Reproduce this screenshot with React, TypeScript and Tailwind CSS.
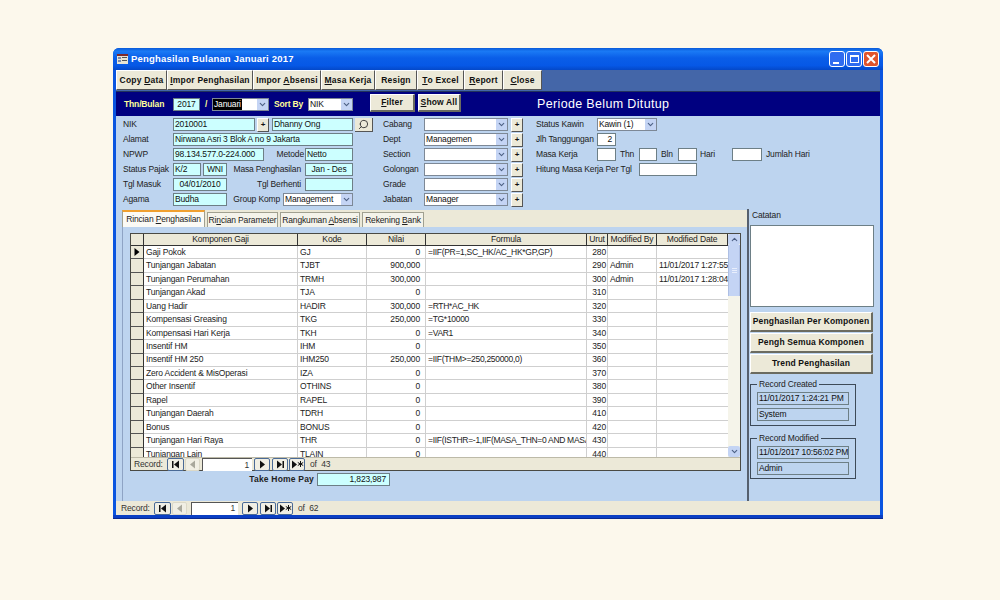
import { Search, ChevronDown, ChevronUp } from "lucide-react";
import type { ReactNode } from "react";

const font = "font-['Liberation_Sans',sans-serif]";

const toolbarItems: [string, string, string, number][] = [
  ["", "Copy ", "Data", 51],
  ["I", "mpor Penghasilan", "", 86],
  ["", "Impor ", "Absensi", 68],
  ["M", "asa Kerja", "", 54],
  ["", "Resign", "", 42],
  ["T", "o Excel", "", 47],
  ["R", "eport", "", 39],
  ["C", "lose", "", 39],
];

const rows: [string, string, string, string, string, string, string][] = [
  ["Gaji Pokok", "GJ", "0", "=IIF(PR=1,SC_HK/AC_HK*GP,GP)", "280", "", ""],
  ["Tunjangan Jabatan", "TJBT", "900,000", "", "290", "Admin", "11/01/2017 1:27:55"],
  ["Tunjangan Perumahan", "TRMH", "300,000", "", "300", "Admin", "11/01/2017 1:28:04"],
  ["Tunjangan Akad", "TJA", "0", "", "310", "", ""],
  ["Uang Hadir", "HADIR", "300,000", "=RTH*AC_HK", "320", "", ""],
  ["Kompensasi Greasing", "TKG", "250,000", "=TG*10000", "330", "", ""],
  ["Kompensasi Hari Kerja", "TKH", "0", "=VAR1", "340", "", ""],
  ["Insentif HM", "IHM", "0", "", "350", "", ""],
  ["Insentif HM 250", "IHM250", "250,000", "=IIF(THM>=250,250000,0)", "360", "", ""],
  ["Zero Accident & MisOperasi", "IZA", "0", "", "370", "", ""],
  ["Other Insentif", "OTHINS", "0", "", "380", "", ""],
  ["Rapel", "RAPEL", "0", "", "390", "", ""],
  ["Tunjangan Daerah", "TDRH", "0", "", "410", "", ""],
  ["Bonus", "BONUS", "0", "", "420", "", ""],
  ["Tunjangan Hari Raya", "THR", "0", "=IIF(ISTHR=-1,IIF(MASA_THN=0 AND MASA", "430", "", ""],
  ["Tunjangan Lain", "TLAIN", "0", "", "440", "", ""],
];

const cols = "grid grid-cols-[13px_154px_69px_59px_161px_21px_49px_71px]";

function Field({ value, w, center, right, white }: { value?: string; w: string; center?: boolean; right?: boolean; white?: boolean }) {
  return (
    <div
      className={`${w} h-[13px] shrink-0 flex items-center px-px border border-[#6d7f86] overflow-hidden whitespace-nowrap ${white ? "bg-white" : "bg-[#ccffff]"} ${center ? "justify-center" : ""} ${right ? "justify-end pr-[3px]" : ""}`}
    >
      {value}
    </div>
  );
}

function Combo({ value, w }: { value?: string; w: string }) {
  return (
    <div className={`${w} h-[13px] shrink-0 flex items-center bg-white border border-[#7d8896] overflow-hidden`}>
      <span className="flex-1 px-px whitespace-nowrap overflow-hidden">{value}</span>
      <span className="w-[11px] h-[11px] flex items-center justify-center bg-[#c4d4f4]">
        <ChevronDown size={9} strokeWidth={3} className="text-[#4d6185]" />
      </span>
    </div>
  );
}

function PlusBtn() {
  return (
    <div className="w-[12px] h-[14px] shrink-0 flex items-center justify-center bg-[#ece9d8] border-r border-b border-[#555] border-t-white border-l-white border-t border-l text-[8px] font-bold">
      +
    </div>
  );
}

function RaisedBtn({ children, w, h }: { children: ReactNode; w: string; h: string }) {
  return (
    <div
      className={`${w} ${h} shrink-0 flex items-center justify-center bg-[#ece9d8] border-t border-l border-t-white border-l-white border-r-2 border-b-2 border-r-[#6b6b60] border-b-[#6b6b60] font-bold tracking-[0.15px] text-[#111] whitespace-nowrap`}
    >
      {children}
    </div>
  );
}

function Label({ children, w }: { children: ReactNode; w: string }) {
  return <span className={`${w} shrink-0 whitespace-nowrap text-[#222]`}>{children}</span>;
}

function NavIcon({ kind }: { kind: "first" | "prev" | "next" | "last" | "new" }) {
  const color = kind === "prev" ? "#a9a89c" : "#111";
  return (
    <svg width="13" height="9" viewBox="0 0 13 9" fill={color}>
      {kind === "first" && (
        <>
          <rect x="3" y="1" width="1.5" height="7" />
          <path d="M10 0.5v8L5 4.5z" />
        </>
      )}
      {kind === "prev" && <path d="M9 0.5v8L4 4.5z" />}
      {kind === "next" && <path d="M4 0.5v8L9 4.5z" />}
      {kind === "last" && (
        <>
          <path d="M3 0.5v8L8 4.5z" />
          <rect x="8.5" y="1" width="1.5" height="7" />
        </>
      )}
      {kind === "new" && (
        <>
          <path d="M1 0.5v8L6 4.5z" />
          <path d="M9.5 1v6M6.8 2.5l5.4 3M12.2 2.5l-5.4 3" stroke={color} strokeWidth="1" fill="none" />
        </>
      )}
    </svg>
  );
}

function NavBtn({ kind, w }: { kind: "first" | "prev" | "next" | "last" | "new"; w: string }) {
  return (
    <div
      className={`${w} h-[13px] shrink-0 flex items-center justify-center rounded-[2px] bg-[#f1efe4] border ${kind === "prev" ? "border-[#dcd9c8]" : "border-[#4a6a96]"}`}
    >
      <NavIcon kind={kind} />
    </div>
  );
}

function RecordNav({ total, labelW, inputW, gap }: { total: string; labelW: string; inputW: string; gap: string }) {
  return (
    <div className="flex items-center h-full text-[#333]">
      <span className={labelW}>Record:</span>
      <NavBtn kind="first" w="w-[17px]" />
      <div className="w-[1px]" />
      <NavBtn kind="prev" w="w-[15px]" />
      <div className={gap} />
      <div className={`${inputW} h-[13px] flex items-center justify-end pr-[3px] bg-white border-t border-l border-[#555]`}>1</div>
      <div className={gap} />
      <NavBtn kind="next" w="w-[16px]" />
      <div className="w-[2px]" />
      <NavBtn kind="last" w="w-[16px]" />
      <div className="w-[1px]" />
      <NavBtn kind="new" w="w-[16px]" />
      <span className="ml-[5px]">of&nbsp; {total}</span>
    </div>
  );
}

function Group({ title, a, b, h }: { title: string; a: string; b: string; h: string }) {
  return (
    <div className={`relative w-[106px] ${h} border border-[#3d4a58] px-[6px] pt-[7px] flex flex-col gap-[3px]`}>
      <span className="absolute left-[6px] -top-[5px] px-[2px] bg-[#bdd4ef] text-[#222] whitespace-nowrap">{title}</span>
      <div className="h-[13px] flex items-center px-px border border-[#6d7f86] bg-[#bdd4ef] whitespace-nowrap">{a}</div>
      <div className="h-[13px] flex items-center px-px border border-[#6d7f86] bg-[#bdd4ef] whitespace-nowrap">{b}</div>
    </div>
  );
}

export default function App() {
  return (
    <div className={`${font} w-[1000px] h-[600px] bg-[#fcf8ec] pt-[48px] pl-[113px] text-[8.5px] tracking-[-0.15px] leading-none text-[#111]`}>
      <div className="w-[770px] h-[471px] flex flex-col rounded-t-[6px] overflow-hidden bg-[#0a55e0]">
        {/* title bar */}
        <div className="h-[22px] shrink-0 flex items-center pl-[4px] pr-[4px] bg-[linear-gradient(180deg,#0a5ad8_0%,#1a7af5_15%,#0a5ee8_45%,#0658e6_80%,#0448c8_100%)]">
          <svg width="11" height="10" viewBox="0 0 11 10" className="shrink-0">
            <rect width="11" height="10" fill="#e8e4d4" />
            <rect x="0" y="0" width="11" height="2" fill="#7f2a2a" />
            <rect x="1" y="3" width="3" height="2" fill="#7a8ab0" />
            <rect x="5" y="3" width="5" height="1" fill="#555" />
            <rect x="1" y="6" width="3" height="2" fill="#7a8ab0" />
            <rect x="5" y="6" width="5" height="1" fill="#555" />
          </svg>
          <span className="ml-[3px] text-white font-bold text-[9.5px] tracking-[0.2px] whitespace-nowrap">Penghasilan Bulanan Januari 2017</span>
          <div className="ml-auto flex gap-[1px]">
            <div className="w-[16px] h-[16px] rounded-[3px] border border-white bg-[#2f6cf0] flex items-end pl-[3px] pb-[2px]">
              <div className="w-[6px] h-[2px] bg-white" />
            </div>
            <div className="w-[16px] h-[16px] rounded-[3px] border border-white bg-[#2f6cf0] flex items-center justify-center">
              <div className="w-[9px] h-[8px] border border-white border-t-2" />
            </div>
            <div className="w-[16px] h-[16px] rounded-[3px] border border-white bg-[#e0542c] flex items-center justify-center">
              <svg width="10" height="10" viewBox="0 0 10 10">
                <path d="M1 1l8 8M9 1l-8 8" stroke="#fff" strokeWidth="2" />
              </svg>
            </div>
          </div>
        </div>

        <div className="flex-1 flex flex-col mx-[3px] min-h-0">
          {/* toolbar */}
          <div className="h-[22px] shrink-0 flex items-stretch bg-[#4466a8] pb-[1px] border-b border-[#22335c]">
            {toolbarItems.map(([u, rest, u2, w], i) => (
              <div
                key={i}
                style={{ width: w }}
                className="shrink-0 flex items-center justify-center bg-[#ece9d8] border-t border-l border-white border-r border-r-[#555] border-b border-b-[#555] font-bold tracking-[0.2px] whitespace-nowrap"
              >
                {u && <u>{u}</u>}
                <span className="whitespace-pre">{rest}</span>
                {u2 && (
                  <>
                    <u>{u2[0]}</u>
                    {u2.slice(1)}
                  </>
                )}
              </div>
            ))}
          </div>

          {/* filter bar */}
          <div className="h-[24px] shrink-0 flex items-center bg-[#000080] pl-[8px]">
            <span className="w-[49px] font-bold text-[#ffff99] whitespace-nowrap">Thn/Bulan</span>
            <Field value="2017" w="w-[27px]" center />
            <span className="w-[12px] text-center font-bold text-[#ffff99]">/</span>
            <div className="w-[57px] h-[13px] shrink-0 flex items-center bg-white border border-[#7d8896]">
              <span className="w-[29px] h-full flex items-center bg-black text-white px-px">Januari</span>
              <span className="ml-auto w-[11px] h-[11px] flex items-center justify-center bg-[#c4d4f4]">
                <ChevronDown size={9} strokeWidth={3} className="text-[#4d6185]" />
              </span>
            </div>
            <span className="ml-[5px] w-[34px] font-bold text-[#ffff99] whitespace-nowrap">Sort By</span>
            <Combo value="NIK" w="w-[45px]" />
            <div className="w-[17px]" />
            <div className="flex gap-[3px] pb-[2px]">
              <RaisedBtn w="w-[45px]" h="h-[18px]">
                <span>
                  <u>F</u>ilter
                </span>
              </RaisedBtn>
              <RaisedBtn w="w-[43px]" h="h-[18px]">
                <span>
                  <u>S</u>how All
                </span>
              </RaisedBtn>
            </div>
            <span className="ml-[76px] text-[12.5px] tracking-[0.35px] text-white whitespace-nowrap">Periode Belum Ditutup</span>
          </div>

          {/* form header */}
          <div className="h-[93px] shrink-0 flex bg-[#bdd4ef] pl-[7px] pt-[2px]">
            <div className="w-[260px] shrink-0 flex flex-col gap-[2px]">
              <div className="h-[13px] flex items-center">
                <Label w="w-[50px]">NIK</Label>
                <Field value="2010001" w="w-[82px]" />
                <div className="w-[2px]" />
                <PlusBtn />
                <div className="w-[3px]" />
                <Field value="Dhanny Ong" w="w-[81px]" />
                <div className="w-[2px]" />
                <div className="w-[18px] h-[14px] shrink-0 flex items-center justify-center bg-[#ece9d8] border-r border-b border-[#555]">
                  <Search size={11} strokeWidth={2} className="-scale-x-100 text-[#333]" />
                </div>
              </div>
              <div className="h-[13px] flex items-center">
                <Label w="w-[50px]">Alamat</Label>
                <Field value="Nirwana Asri 3 Blok A no 9 Jakarta" w="w-[180px]" />
              </div>
              <div className="h-[13px] flex items-center">
                <Label w="w-[50px]">NPWP</Label>
                <Field value="98.134.577.0-224.000" w="w-[91px]" />
                <span className="w-[41px] shrink-0 text-right pr-[1px] text-[#222]">Metode</span>
                <Field value="Netto" w="w-[48px]" />
              </div>
              <div className="h-[13px] flex items-center">
                <Label w="w-[50px]">Status Pajak</Label>
                <Field value="K/2" w="w-[28px]" />
                <div className="w-[2px]" />
                <Field value="WNI" w="w-[24px]" center />
                <span className="w-[78px] shrink-0 text-right pr-[4px] text-[#222] whitespace-nowrap">Masa Penghasilan</span>
                <Field value="Jan - Des" w="w-[48px]" center />
              </div>
              <div className="h-[13px] flex items-center">
                <Label w="w-[50px]">Tgl Masuk</Label>
                <Field value="04/01/2010" w="w-[54px]" center />
                <span className="w-[78px] shrink-0 text-right pr-[4px] text-[#222] whitespace-nowrap">Tgl Berhenti</span>
                <Field w="w-[48px]" />
              </div>
              <div className="h-[13px] flex items-center">
                <Label w="w-[50px]">Agama</Label>
                <Field value="Budha" w="w-[54px]" />
                <span className="w-[56px] shrink-0 text-right pr-[3px] text-[#222] whitespace-nowrap">Group Komp</span>
                <Combo value="Management" w="w-[70px]" />
              </div>
            </div>

            <div className="w-[153px] shrink-0 flex flex-col gap-[2px]">
              {[
                ["Cabang", ""],
                ["Dept", "Managemen"],
                ["Section", ""],
                ["Golongan", ""],
                ["Grade", ""],
                ["Jabatan", "Manager"],
              ].map(([label, value]) => (
                <div key={label} className="h-[13px] flex items-center">
                  <Label w="w-[41px]">{label}</Label>
                  <Combo value={value} w="w-[84px]" />
                  <div className="w-[3px]" />
                  <PlusBtn />
                </div>
              ))}
            </div>

            <div className="flex-1 flex flex-col gap-[2px]">
              <div className="h-[13px] flex items-center">
                <Label w="w-[61px]">Status Kawin</Label>
                <Combo value="Kawin (1)" w="w-[60px]" />
              </div>
              <div className="h-[13px] flex items-center">
                <Label w="w-[61px]">Jlh Tanggungan</Label>
                <Field value="2" w="w-[19px]" white right />
              </div>
              <div className="h-[13px] flex items-center">
                <Label w="w-[61px]">Masa Kerja</Label>
                <Field w="w-[19px]" white />
                <span className="w-[23px] pl-[4px] text-[#222]">Thn</span>
                <Field w="w-[18px]" white />
                <span className="w-[21px] pl-[4px] text-[#222]">Bln</span>
                <Field w="w-[19px]" white />
                <span className="w-[35px] pl-[3px] text-[#222]">Hari</span>
                <Field w="w-[30px]" white />
                <span className="pl-[4px] text-[#222] whitespace-nowrap">Jumlah Hari</span>
              </div>
              <div className="h-[13px] flex items-center">
                <Label w="w-[103px]">Hitung Masa Kerja Per Tgl</Label>
                <Field w="w-[58px]" white />
              </div>
            </div>
          </div>

          {/* main */}
          <div className="h-[292px] shrink-0 flex bg-[#bdd4ef]">
            <div className="w-[631px] shrink-0 pl-[6px] pt-px">
              <div className="h-[17px] flex items-end bg-[#ece9d8] gap-[2px]">
                <div className="w-[83px] h-[17px] flex items-center justify-center bg-[#fbfaf5] border-t-2 border-[#f0a030] border-x border-x-[#a0a090] text-[#222] whitespace-nowrap">
                  <span>
                    Rincian <u>P</u>enghasilan
                  </span>
                </div>
                <div className="w-[71px] h-[15px] flex items-center justify-center bg-[#f4f3ea] border-t border-x border-[#a0a090] text-[#222] whitespace-nowrap">
                  <span>
                    Ri<u>n</u>cian Parameter
                  </span>
                </div>
                <div className="w-[80px] h-[15px] flex items-center justify-center bg-[#f4f3ea] border-t border-x border-[#a0a090] text-[#222] whitespace-nowrap">
                  <span>
                    Rangkuman <u>A</u>bsensi
                  </span>
                </div>
                <div className="w-[62px] h-[15px] flex items-center justify-center bg-[#f4f3ea] border-t border-x border-[#a0a090] text-[#222] whitespace-nowrap">
                  <span>
                    Rekening <u>B</u>ank
                  </span>
                </div>
              </div>
              <div className="h-[274px] border-l border-[#8ea3c4] pl-[7px] pt-[6px]">
                {/* subform */}
                <div className="w-[611px] h-[238px] flex flex-col border border-[#4a4a44] bg-[#ece9d8]">
                  <div className="h-[223px] shrink-0 flex">
                    <div className="w-[597px] shrink-0 overflow-hidden bg-white">
                      <div className={`${cols} h-[12px] bg-[#ece9d8] border-b border-[#333]`}>
                        {["", "Komponen Gaji", "Kode", "Nilai", "Formula", "Urut", "Modified By", "Modified Date"].map((h, i) => (
                          <div key={i} className="flex items-center justify-center border-r border-[#333] text-[#222] whitespace-nowrap overflow-hidden">
                            {h}
                          </div>
                        ))}
                      </div>
                      {rows.map((r, i) => (
                        <div key={r[1]} className={`${cols} h-[13.45px] text-[#222] whitespace-nowrap`}>
                          <div className="flex items-center justify-center bg-[#ece9d8] border-r border-b border-r-[#333] border-b-[#555]">
                            {i === 0 && (
                              <svg width="6" height="8" viewBox="0 0 6 8">
                                <path d="M0.5 0v8L5.5 4z" fill="#000" />
                              </svg>
                            )}
                          </div>
                          <div className="flex items-center pl-[2px] border-r border-b border-[#cfcfcf] overflow-hidden">{r[0]}</div>
                          <div className="flex items-center pl-[2px] border-r border-b border-[#cfcfcf] overflow-hidden">{r[1]}</div>
                          <div className="flex items-center justify-end pr-[5px] border-r border-b border-[#cfcfcf] overflow-hidden">{r[2]}</div>
                          <div className="flex items-center pl-[2px] border-r border-b border-[#cfcfcf] overflow-hidden tracking-[-0.3px]">{r[3]}</div>
                          <div className="flex items-center justify-end pr-[1px] border-r border-b border-[#cfcfcf] overflow-hidden">{r[4]}</div>
                          <div className="flex items-center pl-[2px] border-r border-b border-[#cfcfcf] overflow-hidden">{r[5]}</div>
                          <div className="flex items-center pl-[2px] border-b border-[#cfcfcf] overflow-hidden tracking-[-0.2px]">{r[6]}</div>
                        </div>
                      ))}
                    </div>
                    {/* scrollbar */}
                    <div className="w-[12px] shrink-0 flex flex-col bg-[#f5f4ea]">
                      <div className="h-[11px] flex items-center justify-center bg-[#c4d4f4] rounded-[2px]">
                        <ChevronUp size={9} strokeWidth={3} className="text-[#4d6185]" />
                      </div>
                      <div className="h-[51px] bg-[#c4d4f4] flex flex-col items-center justify-center gap-px border-x border-[#aebfe4]">
                        <div className="w-[5px] h-px bg-[#e8eefc]" />
                        <div className="w-[5px] h-px bg-[#e8eefc]" />
                        <div className="w-[5px] h-px bg-[#e8eefc]" />
                      </div>
                      <div className="flex-1" />
                      <div className="h-[11px] flex items-center justify-center bg-[#c4d4f4] rounded-[2px]">
                        <ChevronDown size={9} strokeWidth={3} className="text-[#4d6185]" />
                      </div>
                    </div>
                  </div>
                  <div className="flex-1 pl-[3px] border-t border-[#bdbaa8]">
                    <RecordNav total="43" labelW="w-[33px]" inputW="w-[50px]" gap="w-[2px]" />
                  </div>
                </div>
                <div className="mt-[2px] h-[13px] flex items-center">
                  <span className="w-[187px] shrink-0 text-right pr-[3px] font-bold tracking-[0.2px] text-[#222]">Take Home Pay</span>
                  <Field value="1,823,987" w="w-[73px]" right />
                </div>
              </div>
            </div>

            {/* right column */}
            <div className="flex-1 border-l-2 border-[#56606e] pl-[1px]">
              <div className="h-[12px] flex items-center pl-[2px] text-[#222]">Catatan</div>
              <div className="w-[124px] h-[82px] mt-[4px] bg-white border border-[#6d7f86]" />
              <div className="mt-[5px] flex flex-col gap-px">
                <RaisedBtn w="w-[123px]" h="h-[20px]">Penghasilan Per Komponen</RaisedBtn>
                <RaisedBtn w="w-[123px]" h="h-[20px]">Pengh Semua Komponen</RaisedBtn>
                <RaisedBtn w="w-[123px]" h="h-[20px]">Trend Penghasilan</RaisedBtn>
              </div>
              <div className="mt-[10px] flex flex-col gap-[12px]">
                <Group title="Record Created" a="11/01/2017 1:24:21 PM" b="System" h="h-[42px]" />
                <Group title="Record Modified" a="11/01/2017 10:56:02 PM" b="Admin" h="h-[41px]" />
              </div>
            </div>
          </div>

          {/* form nav */}
          <div className="h-[14px] shrink-0 bg-[#ece9d8] pl-[5px]">
            <RecordNav total="62" labelW="w-[33px]" inputW="w-[47px]" gap="w-[4px]" />
          </div>
        </div>
        <div className="h-[4px] shrink-0 bg-[#0a3fc4] border-b border-[#0a2a90]" />
      </div>
    </div>
  );
}
